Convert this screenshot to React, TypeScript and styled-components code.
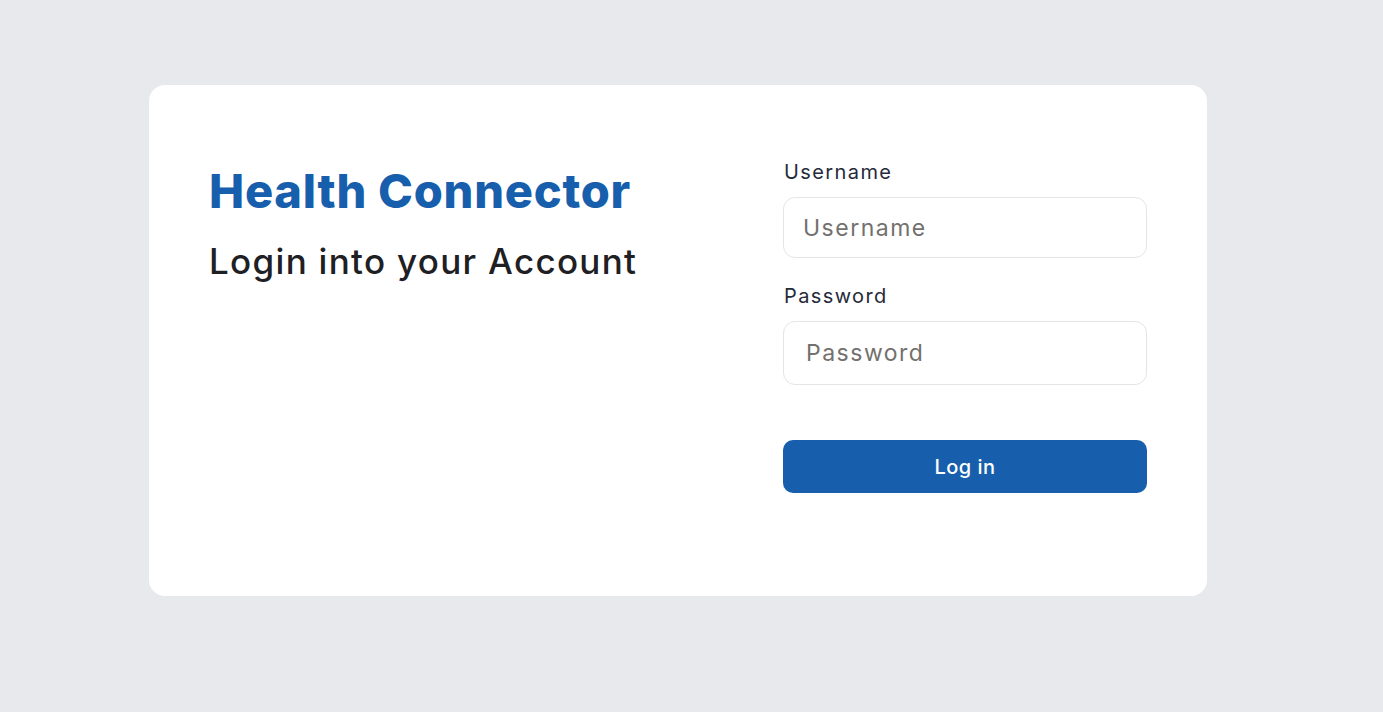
import React from "react";
import styled, { createGlobalStyle } from "styled-components";

const GlobalStyle = createGlobalStyle`
  html, body {
    margin: 0;
    padding: 0;
    background: #e8e9ed;
    font-family: "Inter", "Noto Sans", sans-serif;
  }
  * { box-sizing: border-box; }
`;

const Page = styled.div`
  width: 1383px;
  height: 712px;
  padding: 85px 0 0 149px;
  background: #e8e9ed;
`;

const Card = styled.div`
  width: 1058px;
  height: 511px;
  background: #ffffff;
  border-radius: 16px;
  padding: 72px 60px 0 60px;
  display: flex;
  justify-content: space-between;
`;

const Intro = styled.div`
  display: flex;
  flex-direction: column;
  padding-top: 6px;
`;

const Brand = styled.h1`
  margin: 0;
  font-size: 47px;
  line-height: 56px;
  font-weight: 800;
  color: #175fad;
  letter-spacing: 0.75px;
`;

const Subtitle = styled.h2`
  margin: 20px 0 0 0;
  font-size: 35px;
  line-height: 44px;
  font-weight: 500;
  color: #1e2024;
  letter-spacing: 1.3px;
`;

const Form = styled.form`
  width: 364px;
  display: flex;
  flex-direction: column;
`;

const Label = styled.label`
  font-size: 20px;
  line-height: 30px;
  font-weight: 400;
  color: #262a3a;
  margin-left: 1px;
  letter-spacing: 1.4px;
`;

const Input = styled.input<{ $indent: number; $height: number }>`
  margin-top: 10px;
  height: ${(p) => p.$height}px;
  width: 100%;
  border: 1px solid #e4e5e8;
  border-radius: 12px;
  padding: 0 0 0 ${(p) => p.$indent}px;
  font-family: inherit;
  font-size: 23px;
  letter-spacing: 1.5px;
  color: #222;
  outline: none;
  background: #fff;
  &::placeholder {
    color: #73706d;
  }
`;

const Field = styled.div<{ $gap: number }>`
  display: flex;
  flex-direction: column;
  margin-bottom: ${(p) => p.$gap}px;
`;

const Button = styled.button`
  height: 53px;
  width: 100%;
  border: none;
  border-radius: 10px;
  background: #175fad;
  color: #ffffff;
  font-family: inherit;
  font-size: 20px;
  font-weight: 500;
  letter-spacing: 0.5px;
  cursor: pointer;
`;

export default function App() {
  return (
    <>
      <GlobalStyle />
      <Page>
        <Card>
          <Intro>
            <Brand>Health Connector</Brand>
            <Subtitle>Login into your Account</Subtitle>
          </Intro>
          <Form onSubmit={(e) => e.preventDefault()}>
            <Field $gap={23}>
              <Label htmlFor="username">Username</Label>
              <Input id="username" placeholder="Username" $indent={19} $height={61} />
            </Field>
            <Field $gap={55}>
              <Label htmlFor="password">Password</Label>
              <Input id="password" type="password" placeholder="Password" $indent={22} $height={64} />
            </Field>
            <Button type="submit">Log in</Button>
          </Form>
        </Card>
      </Page>
    </>
  );
}
